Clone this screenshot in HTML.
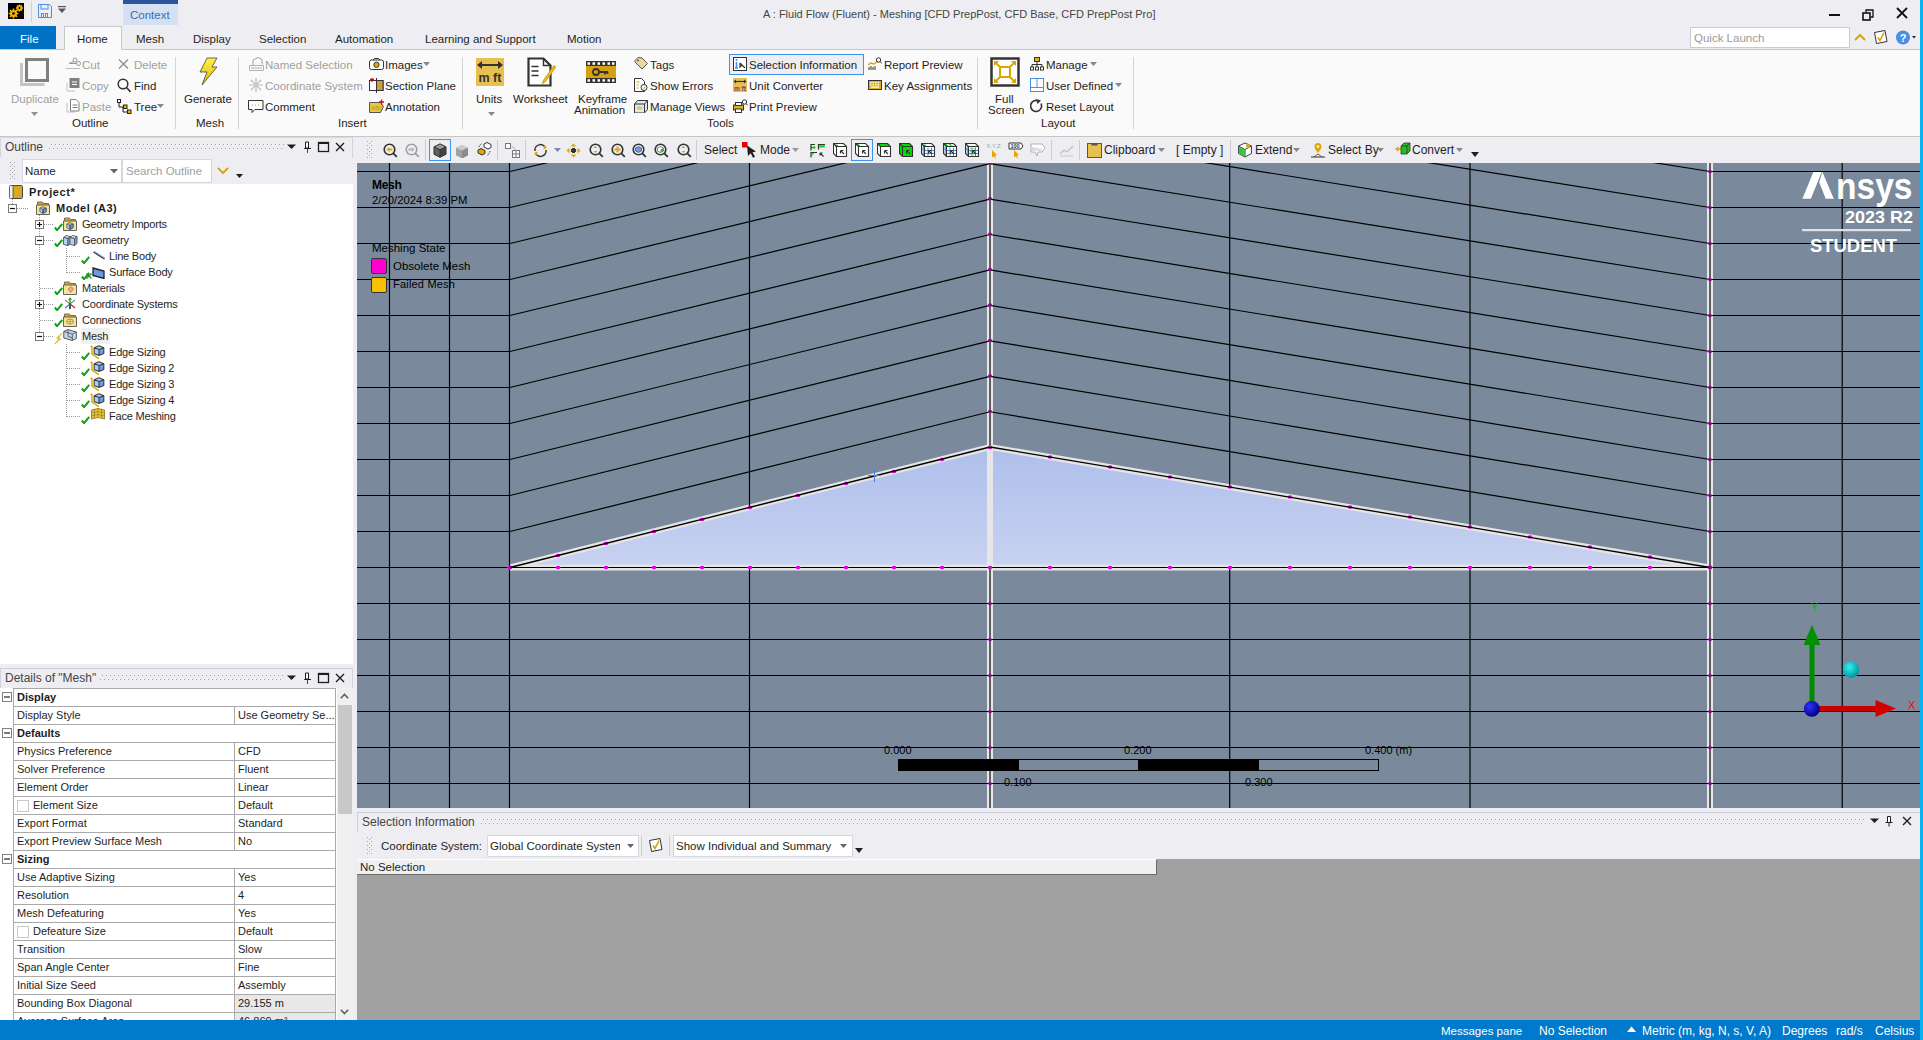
<!DOCTYPE html>
<html><head><meta charset="utf-8">
<style>
*{margin:0;padding:0;box-sizing:border-box}
html,body{width:1923px;height:1040px;overflow:hidden}
body{position:relative;background:#eeeef2;font-family:"Liberation Sans",sans-serif;font-size:11px;color:#1e1e1e}
.a{position:absolute}
.t{position:absolute;white-space:nowrap;line-height:14px}
.dis{color:#a0a0a0}
</style></head><body>
<!-- ===== TITLE BAR ===== -->
<div class="a" style="left:0;top:0;width:1920px;height:26px;background:#eeeef2"></div>
<!-- ===== TABS ===== -->
<div class="a" style="left:0;top:26px;width:56px;height:23px;background:#0072c6"></div>
<div class="t" style="left:20px;top:32px;color:#fff;font-size:11.5px">File</div>
<div class="a" style="left:64px;top:26px;width:58px;height:24px;background:#fafafa;border:1px solid #c8c8c8;border-bottom:none"></div>
<!-- ===== RIBBON ===== -->
<div class="a" style="left:0;top:49px;width:1920px;height:88px;background:#fafafa;border-top:1px solid #c8c8c8;border-bottom:1px solid #c6c6c6"></div>
<div class="a" style="left:65px;top:49px;width:56px;height:2px;background:#fafafa"></div>
<!-- title bar content -->
<svg class="a" style="left:8px;top:3px" width="16" height="16" viewBox="0 0 16 16"><rect width="16" height="16" fill="#000"/><g fill="#f0b000"><circle cx="5.5" cy="10.5" r="3.6"/><circle cx="11.5" cy="5" r="2.8"/></g><g fill="#000"><circle cx="5.5" cy="10.5" r="1.3"/><circle cx="11.5" cy="5" r="1"/></g><g stroke="#f0b000" stroke-width="1.6"><path d="M5.5 5.6v9.8M0.6 10.5h9.8M2 7l7 7M9 7l-7 7"/><path d="M11.5 1.4v7.2M7.9 5h7.2M9 2.5l5 5M14 2.5l-5 5"/></g><g fill="#000"><circle cx="5.5" cy="10.5" r="1.3"/><circle cx="11.5" cy="5" r="1"/></g></svg>
<div class="a" style="left:31px;top:1px;width:1px;height:21px;background:#d0d0d8"></div>
<svg class="a" style="left:38px;top:4px" width="14" height="14" viewBox="0 0 14 14"><path d="M0.5 0.5h11l2 2v11h-13z" fill="none" stroke="#4a90e2"/><rect x="3" y="0.5" width="7" height="4.5" fill="none" stroke="#4a90e2"/><rect x="3.5" y="9.5" width="2" height="4" fill="none" stroke="#4a90e2"/><rect x="7.5" y="9.5" width="2" height="4" fill="none" stroke="#4a90e2"/></svg>
<svg class="a" style="left:58px;top:6px" width="8" height="8" viewBox="0 0 8 8"><rect x="0" y="0" width="8" height="1.2" fill="#555"/><path d="M0 2.5h8L4 7z" fill="#555"/></svg>
<div class="a" style="left:123px;top:0;width:55px;height:4px;background:#2b579a"></div>
<div class="a" style="left:123px;top:4px;width:55px;height:21px;background:#d5e1f2"></div>
<div class="t" style="left:130px;top:8px;color:#3a6cb0;font-size:11.5px">Context</div>
<div class="t" style="left:763px;top:7px;color:#444;font-size:11px">A : Fluid Flow (Fluent) - Meshing [CFD PrepPost, CFD Base, CFD PrepPost Pro]</div>
<div class="a" style="left:1829px;top:14px;width:11px;height:2px;background:#111"></div>
<svg class="a" style="left:1862px;top:9px" width="12" height="12" viewBox="0 0 12 12"><rect x="1" y="4" width="7" height="7" fill="none" stroke="#111" stroke-width="1.6"/><path d="M4 3.5V1h7v7H8.5" fill="none" stroke="#111" stroke-width="1.3"/></svg>
<svg class="a" style="left:1896px;top:7px" width="12" height="12" viewBox="0 0 12 12"><path d="M1 1l10 10M11 1L1 11" stroke="#111" stroke-width="1.8"/></svg>
<!-- tabs -->
<div class="t" style="left:77px;top:32px;font-size:11.5px">Home</div>
<div class="t" style="left:136px;top:32px;font-size:11.5px">Mesh</div>
<div class="t" style="left:193px;top:32px;font-size:11.5px">Display</div>
<div class="t" style="left:259px;top:32px;font-size:11.5px">Selection</div>
<div class="t" style="left:335px;top:32px;font-size:11.5px">Automation</div>
<div class="t" style="left:425px;top:32px;font-size:11.5px">Learning and Support</div>
<div class="t" style="left:567px;top:32px;font-size:11.5px">Motion</div>
<div class="a" style="left:1690px;top:27px;width:160px;height:21px;background:#fff;border:1px solid #c6cbd6"></div>
<div class="t" style="left:1694px;top:31px;color:#9a9a9a;font-size:11.5px">Quick Launch</div>
<svg class="a" style="left:1854px;top:33px" width="12" height="8" viewBox="0 0 12 8"><path d="M1 7l5-5 5 5" fill="none" stroke="#d8a000" stroke-width="1.8"/></svg>
<svg class="a" style="left:1873px;top:29px" width="16" height="16" viewBox="0 0 16 16"><path d="M1.5 3.5l10.5-2 2 11-10.5 2z" fill="#fff" stroke="#333"/><path d="M5 8.5l2 3 4-8" fill="none" stroke="#d8a000" stroke-width="1.6"/></svg>
<svg class="a" style="left:1896px;top:30px" width="20" height="15" viewBox="0 0 20 15"><circle cx="7" cy="7.5" r="7" fill="#4a90e2"/><text x="7" y="11.5" font-size="11" font-weight="bold" fill="#fff" text-anchor="middle" font-family="Liberation Sans">?</text><path d="M16 6h4l-2 2.5z" fill="#222"/></svg>

<!-- ===== RIBBON GROUP: Outline ===== -->
<svg class="a" style="left:20px;top:58px" width="29" height="28" viewBox="0 0 29 28"><path d="M1.5 5v21.5h23" fill="none" stroke="#c4c4c4" stroke-width="3"/><rect x="6.5" y="1.5" width="21" height="21" fill="none" stroke="#808080" stroke-width="3"/></svg>
<div class="t dis" style="left:11px;top:92px;font-size:11.5px">Duplicate</div>
<svg class="a" style="left:31px;top:112px" width="7" height="4" viewBox="0 0 7 4"><path d="M0 0h7L3.5 4z" fill="#909090"/></svg>
<svg class="a" style="left:66px;top:57px" width="15" height="13" viewBox="0 0 15 13"><circle cx="9" cy="3" r="2" fill="none" stroke="#999"/><circle cx="12.5" cy="6.5" r="2" fill="none" stroke="#999"/><path d="M3 6.5h8M8 4.5l-5 2" stroke="#999"/><path d="M0 11.5h14" stroke="#bbb"/></svg>
<div class="t dis" style="left:82px;top:58px;font-size:11.5px">Cut</div>
<svg class="a" style="left:66px;top:78px" width="14" height="14" viewBox="0 0 14 14"><path d="M1 5v8h8" fill="none" stroke="#c0c0c0"/><rect x="3.5" y="0" width="10" height="10" fill="#808080"/><path d="M6 4h5M6 6.5h5" stroke="#fff" stroke-width="1"/></svg>
<div class="t dis" style="left:82px;top:79px;font-size:11.5px">Copy</div>
<svg class="a" style="left:66px;top:99px" width="14" height="14" viewBox="0 0 14 14"><path d="M1 4v9h8" fill="none" stroke="#c0c0c0"/><path d="M4.5 0.5h5.5l3 3v8.5h-8.5z" fill="#fff" stroke="#808080"/><path d="M6.5 6h5M6.5 8.5h5" stroke="#808080"/></svg>
<div class="t dis" style="left:82px;top:100px;font-size:11.5px">Paste</div>
<svg class="a" style="left:118px;top:59px" width="11" height="10" viewBox="0 0 11 10"><path d="M1 0.5l9 9M10 0.5l-9 9" stroke="#8a8a8a" stroke-width="1.2"/></svg>
<div class="t dis" style="left:134px;top:58px;font-size:11.5px">Delete</div>
<svg class="a" style="left:117px;top:78px" width="14" height="15" viewBox="0 0 14 15"><circle cx="6" cy="6" r="4.8" fill="none" stroke="#333" stroke-width="1.5"/><path d="M9.5 9.5l4 4.5" stroke="#333" stroke-width="1.6"/></svg>
<div class="t" style="left:134px;top:79px;font-size:11.5px">Find</div>
<svg class="a" style="left:117px;top:99px" width="15" height="15" viewBox="0 0 15 15"><rect x="0.5" y="0.5" width="3" height="3" fill="#fff" stroke="#222"/><path d="M2 3.5v4.5h4M6 8v5h4" fill="none" stroke="#222"/><rect x="6.5" y="6" width="3.5" height="3.5" fill="#e8b800" stroke="#222"/><rect x="10.5" y="11" width="3.5" height="3.5" fill="#e8b800" stroke="#222"/></svg>
<div class="t" style="left:134px;top:100px;font-size:11.5px">Tree</div>
<svg class="a" style="left:157px;top:104px" width="7" height="4" viewBox="0 0 7 4"><path d="M0 0h7L3.5 4z" fill="#888"/></svg>
<div class="t" style="left:72px;top:116px;font-size:11.5px">Outline</div>
<div class="a" style="left:175px;top:57px;width:1px;height:72px;background:#d4d4d4"></div>
<!-- Mesh group -->
<svg class="a" style="left:199px;top:57px" width="20" height="29" viewBox="0 0 20 29"><defs><linearGradient id="lg1" x1="0" y1="0" x2="0" y2="1"><stop offset="0" stop-color="#fff14a"/><stop offset="1" stop-color="#e0b800"/></linearGradient></defs><path d="M8 1h10l-5 9h5L3 28l5-13H1z" fill="url(#lg1)" stroke="#444" stroke-width="0.8"/></svg>
<div class="t" style="left:184px;top:92px;font-size:11.5px">Generate</div>
<div class="t" style="left:196px;top:116px;font-size:11.5px">Mesh</div>
<div class="a" style="left:238px;top:57px;width:1px;height:72px;background:#d4d4d4"></div>
<!-- Insert group -->
<svg class="a" style="left:249px;top:57px" width="15" height="14" viewBox="0 0 15 14"><path d="M0.5 8.5h14v5H0.5z" fill="none" stroke="#b0b0b0"/><path d="M4 8V3l5-2.5 4 2v5" fill="none" stroke="#a0a0a0"/><path d="M2 11h11" stroke="#b0b0b0"/></svg>
<div class="t dis" style="left:265px;top:58px;font-size:11.5px">Named Selection</div>
<svg class="a" style="left:249px;top:78px" width="14" height="14" viewBox="0 0 14 14"><path d="M7 0v14M0 7h14M2 2l10 10M12 2L2 12" stroke="#b8b8b8" stroke-width="1.2"/><circle cx="7" cy="7" r="2" fill="#c8c8c8"/></svg>
<div class="t dis" style="left:265px;top:79px;font-size:11.5px">Coordinate System</div>
<svg class="a" style="left:248px;top:100px" width="16" height="13" viewBox="0 0 16 13"><path d="M0.5 0.5h14.5v9H7l-3 3v-3H0.5z" fill="#fff" stroke="#333"/><path d="M4 5h1M7 5h1M10 5h1" stroke="#d8a000"/></svg>
<div class="t" style="left:265px;top:100px;font-size:11.5px">Comment</div>
<svg class="a" style="left:369px;top:58px" width="15" height="12" viewBox="0 0 15 12"><rect x="0.5" y="2" width="14" height="9.5" rx="2" fill="#fff" stroke="#333"/><path d="M4 2l1.5-1.5h4L11 2" fill="none" stroke="#333"/><circle cx="7.5" cy="6.8" r="2.6" fill="#e0b000" stroke="#333"/></svg>
<div class="t" style="left:385px;top:58px;font-size:11.5px">Images</div>
<svg class="a" style="left:423px;top:62px" width="7" height="4" viewBox="0 0 7 4"><path d="M0 0h7L3.5 4z" fill="#888"/></svg>
<svg class="a" style="left:369px;top:78px" width="15" height="15" viewBox="0 0 15 15"><rect x="0.5" y="2.5" width="13.5" height="10" fill="#fff" stroke="#333"/><rect x="7.5" y="2.5" width="6.5" height="10" fill="#c8a040" stroke="#333"/><path d="M7.5 0v15" stroke="#333"/><path d="M1 1.5h4M3 0v4" stroke="#e00" stroke-width="1.3"/></svg>
<div class="t" style="left:385px;top:79px;font-size:11.5px">Section Plane</div>
<svg class="a" style="left:369px;top:99px" width="15" height="14" viewBox="0 0 15 14"><path d="M0.5 3.5h11l3 4-3 6h-11z" fill="#e8c840" stroke="#555"/><text x="2" y="10.5" font-size="6" fill="#b09030" font-family="Liberation Sans">ABC</text><path d="M10 3h5M12.5 0.5v5" stroke="#e00" stroke-width="1.3"/></svg>
<div class="t" style="left:385px;top:100px;font-size:11.5px">Annotation</div>
<div class="t" style="left:338px;top:116px;font-size:11.5px">Insert</div>
<div class="a" style="left:462px;top:57px;width:1px;height:72px;background:#d4d4d4"></div>
<!-- Tools group -->
<svg class="a" style="left:476px;top:58px" width="28" height="28" viewBox="0 0 28 28"><rect width="28" height="28" fill="#e8c050"/><path d="M3 7h22" stroke="#333" stroke-width="2"/><path d="M1 7l5-4v8zM27 7l-5-4v8z" fill="#333"/><text x="14" y="24" font-size="12.5" font-weight="bold" fill="#333" text-anchor="middle" font-family="Liberation Sans">m ft</text></svg>
<div class="t" style="left:476px;top:92px;font-size:11.5px">Units</div>
<svg class="a" style="left:488px;top:112px" width="7" height="4" viewBox="0 0 7 4"><path d="M0 0h7L3.5 4z" fill="#888"/></svg>
<svg class="a" style="left:527px;top:57px" width="29" height="30" viewBox="0 0 29 30"><path d="M1.5 1.5h15l7 7v20H1.5z" fill="#fff" stroke="#333" stroke-width="2.2"/><path d="M16.5 1.5v7h7" fill="none" stroke="#333" stroke-width="1.5"/><path d="M4.5 9.5h7M4.5 14h7M4.5 18.5h7" stroke="#333" stroke-width="1.6"/><path d="M27 9l-10 14-1.5 3.5 3-2.5 10-14z" fill="#fff" stroke="#d8a800" stroke-width="1.4"/></svg>
<div class="t" style="left:513px;top:92px;font-size:11.5px">Worksheet</div>
<svg class="a" style="left:586px;top:61px" width="30" height="22" viewBox="0 0 30 22"><rect width="30" height="22" fill="#333"/><rect x="0" y="5" width="30" height="12" fill="#d8a010"/><g fill="#fff"><rect x="1.5" y="1.3" width="2.5" height="2.5"/><rect x="6.5" y="1.3" width="2.5" height="2.5"/><rect x="11.5" y="1.3" width="2.5" height="2.5"/><rect x="16.5" y="1.3" width="2.5" height="2.5"/><rect x="21.5" y="1.3" width="2.5" height="2.5"/><rect x="26" y="1.3" width="2.5" height="2.5"/><rect x="1.5" y="18.2" width="2.5" height="2.5"/><rect x="6.5" y="18.2" width="2.5" height="2.5"/><rect x="11.5" y="18.2" width="2.5" height="2.5"/><rect x="16.5" y="18.2" width="2.5" height="2.5"/><rect x="21.5" y="18.2" width="2.5" height="2.5"/><rect x="26" y="18.2" width="2.5" height="2.5"/></g><circle cx="10" cy="11" r="3" fill="none" stroke="#333" stroke-width="1.8"/><path d="M13 11h9M19 11v2.5M21.5 11v2" stroke="#333" stroke-width="1.8"/></svg>
<div class="t" style="left:578px;top:92px;font-size:11.5px">Keyframe</div>
<div class="t" style="left:574px;top:103px;font-size:11.5px">Animation</div>
<svg class="a" style="left:634px;top:57px" width="14" height="14" viewBox="0 0 14 14"><path d="M1 3.5l3-3 4 0.5 5.5 5.5-5.5 5.5-7-7z" fill="#e8d8a0" stroke="#555"/><circle cx="4" cy="3.5" r="1" fill="#555"/></svg>
<div class="t" style="left:650px;top:58px;font-size:11.5px">Tags</div>
<svg class="a" style="left:634px;top:78px" width="14" height="14" viewBox="0 0 14 14"><path d="M0.5 0.5h7l3 3v3M10.5 12v1.5H0.5v-13" fill="#fff" stroke="#333"/><path d="M2.5 4h3M2.5 7h2M2.5 10h2" stroke="#d8a000"/><circle cx="10" cy="9.5" r="3" fill="#fff" stroke="#333"/><path d="M8.8 9.5l1 1 1.5-2" stroke="#d8a000" fill="none"/></svg>
<div class="t" style="left:650px;top:79px;font-size:11.5px">Show Errors</div>
<svg class="a" style="left:634px;top:100px" width="14" height="13" viewBox="0 0 14 13"><path d="M0.5 4l3-3.5h10v9l-3 3.5h-10z" fill="#dce8f4" stroke="#333"/><path d="M0.5 4h10v8.5M10.5 4l3-3.5" fill="none" stroke="#333"/><ellipse cx="5.5" cy="8" rx="3" ry="1.8" fill="#e8c850"/></svg>
<div class="t" style="left:650px;top:100px;font-size:11.5px">Manage Views</div>
<div class="a" style="left:729px;top:54px;width:135px;height:21px;background:#eeeef2;border:1px solid #3c94ee"></div>
<svg class="a" style="left:733px;top:57px" width="14" height="14" viewBox="0 0 14 14"><rect x="0.5" y="0.5" width="13" height="13" fill="#fff" stroke="#333"/><circle cx="3.5" cy="3" r="1.1" fill="#4a90e2"/><path d="M3.5 5v6M2 11h3" stroke="#4a90e2" stroke-width="1.6"/><path d="M7 6l5 5M7 6v4l1.5-1.5" stroke="#333" stroke-width="1.2" fill="none"/></svg>
<div class="t" style="left:749px;top:58px;font-size:11.5px">Selection Information</div>
<svg class="a" style="left:733px;top:78px" width="14" height="14" viewBox="0 0 14 14"><rect width="14" height="14" fill="#e8c050"/><path d="M2 3.5h10" stroke="#333" stroke-width="1.2"/><path d="M0.5 3.5l2.5-2v4zM13.5 3.5l-2.5-2v4z" fill="#333"/><text x="7" y="12.5" font-size="6.5" font-weight="bold" fill="#555" text-anchor="middle" font-family="Liberation Sans">m ft</text></svg>
<div class="t" style="left:749px;top:79px;font-size:11.5px">Unit Converter</div>
<svg class="a" style="left:733px;top:99px" width="15" height="14" viewBox="0 0 15 14"><rect x="0.5" y="6" width="10" height="5" fill="#e0b020" stroke="#333"/><rect x="2.5" y="3.5" width="6" height="3" fill="#fff" stroke="#333"/><rect x="2.5" y="10" width="6" height="3.5" fill="#fff" stroke="#333"/><circle cx="11.5" cy="3" r="2.2" fill="none" stroke="#333"/><path d="M13 4.5l1.8 2" stroke="#333"/></svg>
<div class="t" style="left:749px;top:100px;font-size:11.5px">Print Preview</div>
<svg class="a" style="left:868px;top:57px" width="14" height="14" viewBox="0 0 14 14"><path d="M1 13v-3M3 13v-4M5 13v-3M7 13v-4" stroke="#333"/><path d="M0 8l3-2 3 1 4-3" fill="none" stroke="#e0a800" stroke-width="1.5"/><circle cx="10.5" cy="3" r="2.2" fill="none" stroke="#333"/><path d="M12 4.5l1.8 2" stroke="#333"/></svg>
<div class="t" style="left:884px;top:58px;font-size:11.5px">Report Preview</div>
<svg class="a" style="left:868px;top:80px" width="14" height="10" viewBox="0 0 14 10"><rect x="0.5" y="0.5" width="13" height="9" fill="#e0b020" stroke="#333"/><g fill="#fff"><rect x="2" y="2" width="1.5" height="1.2"/><rect x="4.5" y="2" width="1.5" height="1.2"/><rect x="7" y="2" width="1.5" height="1.2"/><rect x="9.5" y="2" width="1.5" height="1.2"/><rect x="2" y="4.2" width="1.5" height="1.2"/><rect x="4.5" y="4.2" width="1.5" height="1.2"/><rect x="7" y="4.2" width="1.5" height="1.2"/><rect x="9.5" y="4.2" width="1.5" height="1.2"/><rect x="3" y="6.5" width="8" height="1.2"/></g></svg>
<div class="t" style="left:884px;top:79px;font-size:11.5px">Key Assignments</div>
<div class="t" style="left:707px;top:116px;font-size:11.5px">Tools</div>
<div class="a" style="left:977px;top:57px;width:1px;height:72px;background:#d4d4d4"></div>
<!-- Layout group -->
<svg class="a" style="left:990px;top:57px" width="30" height="30" viewBox="0 0 30 30"><rect x="1.5" y="1.5" width="27" height="27" fill="#fff" stroke="#333" stroke-width="2.5"/><rect x="10" y="10" width="10" height="10" fill="none" stroke="#d8a800" stroke-width="2"/><path d="M5 5l5 5M25 5l-5 5M5 25l5-5M25 25l-5-5" stroke="#d8a800" stroke-width="2"/><path d="M4 4h5L4 9zM26 4h-5l5 5zM4 26h5l-5-5zM26 26h-5l5-5z" fill="#d8a800"/></svg>
<div class="t" style="left:995px;top:92px;font-size:11.5px">Full</div>
<div class="t" style="left:988px;top:103px;font-size:11.5px">Screen</div>
<svg class="a" style="left:1030px;top:57px" width="14" height="14" viewBox="0 0 14 14"><rect x="4.5" y="0.5" width="5" height="4" fill="#e0b020" stroke="#333"/><path d="M7 4.5v3M2 7.5h10M2 7.5v2.5M7 7.5v2.5M12 7.5v2.5" stroke="#333"/><rect x="0.5" y="10" width="3" height="3" fill="#fff" stroke="#333"/><rect x="5.5" y="10" width="3" height="3" fill="#fff" stroke="#333"/><rect x="10.5" y="10" width="3" height="3" fill="#fff" stroke="#333"/></svg>
<div class="t" style="left:1046px;top:58px;font-size:11.5px">Manage</div>
<svg class="a" style="left:1090px;top:62px" width="7" height="4" viewBox="0 0 7 4"><path d="M0 0h7L3.5 4z" fill="#888"/></svg>
<svg class="a" style="left:1030px;top:78px" width="14" height="14" viewBox="0 0 14 14"><rect x="0.5" y="0.5" width="13" height="13" fill="#fff" stroke="#4a90e2"/><path d="M7 0.5v9M0.5 9.5h13" stroke="#4a90e2"/></svg>
<div class="t" style="left:1046px;top:79px;font-size:11.5px">User Defined</div>
<svg class="a" style="left:1115px;top:83px" width="7" height="4" viewBox="0 0 7 4"><path d="M0 0h7L3.5 4z" fill="#888"/></svg>
<svg class="a" style="left:1030px;top:99px" width="14" height="14" viewBox="0 0 14 14"><path d="M11 4.5A5.5 5.5 0 1 1 7 1.5" fill="none" stroke="#333" stroke-width="1.6"/><path d="M6 0l5 1.5-3.5 3.5z" fill="#333"/></svg>
<div class="t" style="left:1046px;top:100px;font-size:11.5px">Reset Layout</div>
<div class="t" style="left:1041px;top:116px;font-size:11.5px">Layout</div>
<div class="a" style="left:1133px;top:57px;width:1px;height:72px;background:#d4d4d4"></div>

<!-- ===== LEFT PANEL ===== -->
<div class="a" style="left:0;top:184px;width:353px;height:480px;background:#fff"></div>
<div class="a" style="left:0;top:688px;width:337px;height:332px;background:#fff"></div>
<svg width="0" height="0" style="position:absolute"><defs>
<symbol id="chk" viewBox="0 0 9 8"><path d="M0.8 4.5l2.3 2.6L8.2 0.8" fill="none" stroke="#179a17" stroke-width="2"/></symbol>
<symbol id="fold" viewBox="0 0 14 14"><path d="M1.5 1h5l1 1.5h5v3H1.5z" fill="#d8a820" stroke="#555" stroke-width="0.8"/><path d="M0.5 4h13v9.5H0.5z" fill="#f4e49a" stroke="#555" stroke-width="0.9"/></symbol>
<symbol id="cube" viewBox="0 0 14 14"><path d="M7 1l5.5 2.5v6.5L7 13 1.5 10V3.5z" fill="#a8c8f0" stroke="#444" stroke-width="1.1"/><path d="M1.5 3.5L7 6l5.5-2.5M7 6v7" fill="none" stroke="#444" stroke-width="1.1"/><path d="M7 6l5.5-2.5v6.5L7 13z" fill="#5a9ae8"/><path d="M7 6l5.5-2.5v6.5L7 13zM7 6v7" fill="none" stroke="#444" stroke-width="1.1"/></symbol>
<symbol id="cubes2" viewBox="0 0 15 11"><path d="M0.5 2.5L3 0.5L7.5 1.5L5 3.5z" fill="#dce9f8" stroke="#555" stroke-width="0.9"/><path d="M0.5 2.5L5 3.5V10.5L0.5 9.5z" fill="#b4d0f2" stroke="#555" stroke-width="0.9"/><path d="M5 3.5L7.5 1.5V8.5L5 10.5z" fill="#6aa4e8" stroke="#555" stroke-width="0.9"/><path d="M7.0 2.5L9.5 0.5L14.0 1.5L11.5 3.5z" fill="#dce9f8" stroke="#555" stroke-width="0.9"/><path d="M7.0 2.5L11.5 3.5V10.5L7.0 9.5z" fill="#b4d0f2" stroke="#555" stroke-width="0.9"/><path d="M11.5 3.5L14.0 1.5V8.5L11.5 10.5z" fill="#6aa4e8" stroke="#555" stroke-width="0.9"/></symbol>
<symbol id="mbox" viewBox="0 0 9 9"><rect x="0.5" y="0.5" width="8" height="8" fill="#fff" stroke="#7a7a7a"/><path d="M2 4.5h5" stroke="#111" stroke-width="1.2"/></symbol>
<symbol id="pbox" viewBox="0 0 9 9"><rect x="0.5" y="0.5" width="8" height="8" fill="#fff" stroke="#7a7a7a"/><path d="M2 4.5h5M4.5 2v5" stroke="#111" stroke-width="1.2"/></symbol>
<symbol id="esz" viewBox="0 0 15 15"><path d="M0.5 1.8l1.5 0.8v7.2l7 5" fill="none" stroke="#d8a000" stroke-width="1.4"/><path d="M9 1.8L13.8 3.7V9.5L9 11.5 4.2 9.5V3.7z" fill="#a8ccf6"/><path d="M9 5.6L13.8 3.7V9.5L9 11.5z" fill="#5aa0f0"/><path d="M9 1.8L13.8 3.7V9.5L9 11.5 4.2 9.5V3.7zM4.2 3.7L9 5.6 13.8 3.7M9 5.6v5.9" fill="none" stroke="#404040" stroke-width="1.1" stroke-linejoin="round"/></symbol>
</defs></svg>
<div class="a" style="left:0;top:137px;width:353px;height:1px;background:#d6d9e3"></div>
<div class="a" style="left:352px;top:137px;width:1px;height:21px;background:#d0d4de"></div><div class="a" style="left:0;top:138px;width:1px;height:19px;background:#d0d4de"></div>
<div class="t" style="left:5px;top:140px;font-size:12px;color:#444">Outline</div>
<svg class="a" style="left:49px;top:143px" width="235" height="7"><defs><pattern id="gp1" width="4" height="8" patternUnits="userSpaceOnUse"><rect x="2" y="1" width="1" height="1" fill="#a4a4ac"/><rect x="0" y="5" width="1" height="1" fill="#a4a4ac"/></pattern></defs><rect width="235" height="7" fill="url(#gp1)"/></svg>
<svg class="a" style="left:287px;top:141px" width="58" height="12" viewBox="0 0 58 12"><path d="M0 3.5h9L4.5 8z" fill="#1e1e1e"/><path d="M18 1h4v6h2v1h-3v4h-0.8v-4h-3V7h2z" fill="#1e1e1e"/><path d="M18.5 1h3v6h-3z" fill="#fff" stroke="#1e1e1e"/><rect x="31.5" y="1.5" width="10" height="9" fill="none" stroke="#1e1e1e" stroke-width="1.3"/><path d="M31.5 2h10" stroke="#1e1e1e" stroke-width="2"/><path d="M49 2l8 8M57 2l-8 8" stroke="#1e1e1e" stroke-width="1.4"/></svg>
<svg class="a" style="left:10px;top:162px" width="5" height="17"><defs><pattern id="gp3" width="4" height="4" patternUnits="userSpaceOnUse"><rect x="0" y="0" width="1" height="1" fill="#a4a4ac"/><rect x="2" y="2" width="1" height="1" fill="#a4a4ac"/></pattern></defs><rect width="5" height="17" fill="url(#gp3)"/></svg>
<div class="a" style="left:22px;top:159px;width:100px;height:24px;background:#fff;border:1px solid #d4d7e0"></div>
<div class="t" style="left:25px;top:164px;font-size:11.5px">Name</div>
<svg class="a" style="left:110px;top:169px" width="8" height="5" viewBox="0 0 8 5"><path d="M0 0h8L4 4.5z" fill="#666"/></svg>
<div class="a" style="left:122px;top:159px;width:90px;height:24px;background:#fff;border:1px solid #d4d7e0"></div>
<div class="t" style="left:126px;top:164px;font-size:11.5px;color:#a0a0a0">Search Outline</div>
<svg class="a" style="left:217px;top:167px" width="12" height="8" viewBox="0 0 12 8"><path d="M1 1l5 5 5-5" fill="none" stroke="#d8a000" stroke-width="1.8"/></svg>
<svg class="a" style="left:236px;top:174px" width="7" height="4" viewBox="0 0 7 4"><path d="M0 0h7L3.5 4z" fill="#1e1e1e"/></svg>
<div class="a" style="left:12px;top:199px;width:1px;height:5px;background-image:linear-gradient(#9a9a9a 50%,transparent 50%);background-size:1px 2px"></div>
<div class="a" style="left:17px;top:208px;width:11px;height:1px;background-image:linear-gradient(90deg,#9a9a9a 50%,transparent 50%);background-size:2px 1px"></div>
<div class="a" style="left:39px;top:215px;width:1px;height:121px;background-image:linear-gradient(#9a9a9a 50%,transparent 50%);background-size:1px 2px"></div>
<div class="a" style="left:66px;top:248px;width:1px;height:25px;background-image:linear-gradient(#9a9a9a 50%,transparent 50%);background-size:1px 2px"></div>
<div class="a" style="left:66px;top:344px;width:1px;height:73px;background-image:linear-gradient(#9a9a9a 50%,transparent 50%);background-size:1px 2px"></div>
<div class="a" style="left:44px;top:224px;width:10px;height:1px;background-image:linear-gradient(90deg,#9a9a9a 50%,transparent 50%);background-size:2px 1px"></div>
<div class="a" style="left:44px;top:240px;width:10px;height:1px;background-image:linear-gradient(90deg,#9a9a9a 50%,transparent 50%);background-size:2px 1px"></div>
<div class="a" style="left:40px;top:288px;width:14px;height:1px;background-image:linear-gradient(90deg,#9a9a9a 50%,transparent 50%);background-size:2px 1px"></div>
<div class="a" style="left:44px;top:304px;width:10px;height:1px;background-image:linear-gradient(90deg,#9a9a9a 50%,transparent 50%);background-size:2px 1px"></div>
<div class="a" style="left:40px;top:320px;width:14px;height:1px;background-image:linear-gradient(90deg,#9a9a9a 50%,transparent 50%);background-size:2px 1px"></div>
<div class="a" style="left:44px;top:336px;width:10px;height:1px;background-image:linear-gradient(90deg,#9a9a9a 50%,transparent 50%);background-size:2px 1px"></div>
<div class="a" style="left:67px;top:256px;width:14px;height:1px;background-image:linear-gradient(90deg,#9a9a9a 50%,transparent 50%);background-size:2px 1px"></div>
<div class="a" style="left:67px;top:272px;width:14px;height:1px;background-image:linear-gradient(90deg,#9a9a9a 50%,transparent 50%);background-size:2px 1px"></div>
<div class="a" style="left:67px;top:352px;width:14px;height:1px;background-image:linear-gradient(90deg,#9a9a9a 50%,transparent 50%);background-size:2px 1px"></div>
<div class="a" style="left:67px;top:368px;width:14px;height:1px;background-image:linear-gradient(90deg,#9a9a9a 50%,transparent 50%);background-size:2px 1px"></div>
<div class="a" style="left:67px;top:384px;width:14px;height:1px;background-image:linear-gradient(90deg,#9a9a9a 50%,transparent 50%);background-size:2px 1px"></div>
<div class="a" style="left:67px;top:400px;width:14px;height:1px;background-image:linear-gradient(90deg,#9a9a9a 50%,transparent 50%);background-size:2px 1px"></div>
<div class="a" style="left:67px;top:416px;width:14px;height:1px;background-image:linear-gradient(90deg,#9a9a9a 50%,transparent 50%);background-size:2px 1px"></div>
<svg class="a" style="left:9px;top:185px" width="14" height="14" viewBox="0 0 14 14"><rect x="0.5" y="0.5" width="13" height="13" rx="1" fill="#d8a820" stroke="#444"/><rect x="0.8" y="0.8" width="3.2" height="12.4" fill="#eee"/><path d="M4 0.5v13" stroke="#444" stroke-width="0.8"/></svg>
<div class="t" style="left:29px;top:185px;font-size:11px;font-weight:bold;letter-spacing:0.6px;">Project*</div>
<svg class="a" style="left:8px;top:204px" width="9" height="9"><use href="#mbox" width="9" height="9"/></svg>
<svg class="a" style="left:36px;top:201px" width="14" height="14"><use href="#fold" width="14" height="14"/></svg>
<svg class="a" style="left:39px;top:206px" width="8" height="8"><use href="#cube" width="8" height="8"/></svg>
<div class="t" style="left:56px;top:201px;font-size:11px;font-weight:bold;letter-spacing:0.5px;">Model (A3)</div>
<svg class="a" style="left:35px;top:220px" width="9" height="9"><use href="#pbox" width="9" height="9"/></svg><svg class="a" style="left:54px;top:223px" width="9" height="8"><use href="#chk" width="9" height="8"/></svg><svg class="a" style="left:63px;top:217px" width="14" height="14"><use href="#fold" width="14" height="14"/></svg><svg class="a" style="left:66px;top:222px" width="8" height="8"><use href="#cube" width="8" height="8"/></svg><div class="t" style="left:82px;top:217px;font-size:11px;letter-spacing:-0.2px;">Geometry Imports</div>
<svg class="a" style="left:35px;top:236px" width="9" height="9"><use href="#mbox" width="9" height="9"/></svg><svg class="a" style="left:54px;top:239px" width="9" height="8"><use href="#chk" width="9" height="8"/></svg><svg class="a" style="left:63px;top:235px" width="15" height="11"><use href="#cubes2" width="15" height="11"/></svg><div class="t" style="left:82px;top:233px;font-size:11px;letter-spacing:-0.2px;">Geometry</div>
<svg class="a" style="left:81px;top:256px" width="9" height="8"><use href="#chk" width="9" height="8"/></svg>
<svg class="a" style="left:93px;top:251px" width="12" height="9" viewBox="0 0 12 9"><path d="M0.5 1l11 7" stroke="#333" stroke-width="1.3"/><path d="M1 0l11 7" stroke="#8ab0e0" stroke-width="1"/></svg>
<div class="t" style="left:109px;top:249px;font-size:11px;letter-spacing:-0.2px;">Line Body</div>
<svg class="a" style="left:81px;top:272px" width="9" height="8"><use href="#chk" width="9" height="8"/></svg>
<svg class="a" style="left:86px;top:273px" width="6" height="6" viewBox="0 0 6 6"><path d="M0.5 0.5l5 5M5.5 0.5l-5 5" stroke="#179a17" stroke-width="1.3"/></svg>
<svg class="a" style="left:92px;top:267px" width="13" height="12" viewBox="0 0 13 12"><path d="M1 1l11 3v7.5L1 8.5z" fill="#6a98e8" stroke="#222" stroke-width="1.3"/></svg>
<div class="t" style="left:109px;top:265px;font-size:11px;letter-spacing:-0.2px;">Surface Body</div>
<svg class="a" style="left:54px;top:287px" width="9" height="8"><use href="#chk" width="9" height="8"/></svg><svg class="a" style="left:63px;top:281px" width="14" height="14"><use href="#fold" width="14" height="14"/></svg><svg class="a" style="left:67px;top:286px" width="7" height="7" viewBox="0 0 7 7"><path d="M1 3l3-2.5 2.5 2.5-3 3.5z" fill="#e8b090" stroke="#a06040" stroke-width="0.6"/></svg><div class="t" style="left:82px;top:281px;font-size:11px;letter-spacing:-0.2px;">Materials</div>
<svg class="a" style="left:35px;top:300px" width="9" height="9"><use href="#pbox" width="9" height="9"/></svg><svg class="a" style="left:54px;top:303px" width="9" height="8"><use href="#chk" width="9" height="8"/></svg><svg class="a" style="left:63px;top:297px" width="14" height="14" viewBox="0 0 14 14"><path d="M7 7V1" stroke="#20b020" stroke-width="1.5"/><path d="M5 3l2-3 2 3z" fill="#20c020"/><path d="M7 7l5 4" stroke="#e02020" stroke-width="1.5"/><path d="M7 7L2 11" stroke="#4080e0" stroke-width="1.5"/><path d="M7 7L2 3M7 7l5-4" stroke="#555" stroke-width="1"/><rect x="6" y="6" width="2" height="6" fill="#555"/></svg><div class="t" style="left:82px;top:297px;font-size:11px;letter-spacing:-0.2px;">Coordinate Systems</div>
<svg class="a" style="left:54px;top:319px" width="9" height="8"><use href="#chk" width="9" height="8"/></svg><svg class="a" style="left:63px;top:313px" width="14" height="14"><use href="#fold" width="14" height="14"/></svg><svg class="a" style="left:66px;top:318px" width="8" height="7" viewBox="0 0 8 7"><ellipse cx="4" cy="3.5" rx="3.5" ry="2.5" fill="none" stroke="#b08020" stroke-width="0.8"/><path d="M1 3.5h6M4 1v5" stroke="#b08020" stroke-width="0.6"/></svg><div class="t" style="left:82px;top:313px;font-size:11px;letter-spacing:-0.2px;">Connections</div>
<svg class="a" style="left:35px;top:332px" width="9" height="9"><use href="#mbox" width="9" height="9"/></svg>
<div class="a" style="left:81px;top:328px;width:29px;height:16px;background:#f0f0f0"></div>
<svg class="a" style="left:54px;top:333px" width="9" height="11" viewBox="0 0 9 11"><path d="M8 0L2.5 5h3L0.5 11 7 6H4z" fill="#f4dc10" stroke="#c8a000" stroke-width="0.5"/></svg>
<svg class="a" style="left:63px;top:329px" width="14" height="12" viewBox="0 0 14 12"><path d="M0.8 2.5l4-2 8.5 2.5v6.5l-4 2L0.8 9z" fill="#c4daf4" stroke="#555" stroke-width="1"/><path d="M0.8 2.5L9.3 5l4-2M9.3 5v6.5M5 1.2v6.3l4.3 1.3" fill="none" stroke="#555" stroke-width="0.9"/></svg>
<div class="t" style="left:82px;top:329px;font-size:11px;letter-spacing:-0.2px;">Mesh</div>
<svg class="a" style="left:81px;top:352px" width="9" height="8"><use href="#chk" width="9" height="8"/></svg>
<svg class="a" style="left:90px;top:344px" width="15" height="15"><use href="#esz" width="15" height="15"/></svg>
<div class="t" style="left:109px;top:345px;font-size:11px;letter-spacing:-0.2px;">Edge Sizing</div>
<svg class="a" style="left:81px;top:368px" width="9" height="8"><use href="#chk" width="9" height="8"/></svg>
<svg class="a" style="left:90px;top:360px" width="15" height="15"><use href="#esz" width="15" height="15"/></svg>
<div class="t" style="left:109px;top:361px;font-size:11px;letter-spacing:-0.2px;">Edge Sizing 2</div>
<svg class="a" style="left:81px;top:384px" width="9" height="8"><use href="#chk" width="9" height="8"/></svg>
<svg class="a" style="left:90px;top:376px" width="15" height="15"><use href="#esz" width="15" height="15"/></svg>
<div class="t" style="left:109px;top:377px;font-size:11px;letter-spacing:-0.2px;">Edge Sizing 3</div>
<svg class="a" style="left:81px;top:400px" width="9" height="8"><use href="#chk" width="9" height="8"/></svg>
<svg class="a" style="left:90px;top:392px" width="15" height="15"><use href="#esz" width="15" height="15"/></svg>
<div class="t" style="left:109px;top:393px;font-size:11px;letter-spacing:-0.2px;">Edge Sizing 4</div>
<svg class="a" style="left:81px;top:416px" width="9" height="8"><use href="#chk" width="9" height="8"/></svg>
<svg class="a" style="left:91px;top:408px" width="14" height="13" viewBox="0 0 14 13"><path d="M0.5 2Q7 -1 13.5 2v9Q7 8 0.5 11z" fill="#e8c830" stroke="#8a7020" stroke-width="0.8"/><path d="M3.5 1v9M7 0.5v8.5M10.5 1v9M0.5 5Q7 2 13.5 5M0.5 8Q7 5 13.5 8" fill="none" stroke="#8a7020" stroke-width="0.6"/></svg>
<div class="t" style="left:109px;top:409px;font-size:11px;letter-spacing:-0.2px;">Face Meshing</div>
<div class="a" style="left:0;top:668px;width:353px;height:1px;background:#ccd0dc"></div>
<div class="a" style="left:352px;top:668px;width:1px;height:20px;background:#d0d4de"></div><div class="a" style="left:0;top:669px;width:1px;height:19px;background:#d0d4de"></div>
<div class="t" style="left:5px;top:671px;font-size:12px;color:#444">Details of "Mesh"</div>
<svg class="a" style="left:100px;top:674px" width="184" height="7"><defs><pattern id="gp2" width="4" height="8" patternUnits="userSpaceOnUse"><rect x="2" y="1" width="1" height="1" fill="#a4a4ac"/><rect x="0" y="5" width="1" height="1" fill="#a4a4ac"/></pattern></defs><rect width="184" height="7" fill="url(#gp2)"/></svg>
<svg class="a" style="left:287px;top:672px" width="58" height="12" viewBox="0 0 58 12"><path d="M0 3.5h9L4.5 8z" fill="#1e1e1e"/><path d="M18 1h4v6h2v1h-3v4h-0.8v-4h-3V7h2z" fill="#1e1e1e"/><path d="M18.5 1h3v6h-3z" fill="#fff" stroke="#1e1e1e"/><rect x="31.5" y="1.5" width="10" height="9" fill="none" stroke="#1e1e1e" stroke-width="1.3"/><path d="M31.5 2h10" stroke="#1e1e1e" stroke-width="2"/><path d="M49 2l8 8M57 2l-8 8" stroke="#1e1e1e" stroke-width="1.4"/></svg>
<div class="a" style="left:0;top:688px;width:337px;height:332px;overflow:hidden"><div class="a" style="left:13px;top:0px;width:323px;height:19px;border:1px solid #a9a9a9;background:#fff"></div><svg class="a" style="left:2px;top:4px" width="10" height="10" viewBox="0 0 10 10"><rect x="0.5" y="0.5" width="9" height="9" fill="#fff" stroke="#808080"/><path d="M2 5h6" stroke="#111" stroke-width="1.1"/></svg><div class="t" style="left:17px;top:2px;font-size:11px;font-weight:bold">Display</div><div class="a" style="left:13px;top:18px;width:222px;height:19px;border:1px solid #a9a9a9;background:#fff"></div><div class="a" style="left:234px;top:18px;width:102px;height:19px;border:1px solid #a9a9a9;background:#fff"></div><div class="t" style="left:17px;top:20px;font-size:11px">Display Style</div><div class="t" style="left:238px;top:20px;font-size:11px">Use Geometry Se...</div><div class="a" style="left:13px;top:36px;width:323px;height:19px;border:1px solid #a9a9a9;background:#fff"></div><svg class="a" style="left:2px;top:40px" width="10" height="10" viewBox="0 0 10 10"><rect x="0.5" y="0.5" width="9" height="9" fill="#fff" stroke="#808080"/><path d="M2 5h6" stroke="#111" stroke-width="1.1"/></svg><div class="t" style="left:17px;top:38px;font-size:11px;font-weight:bold">Defaults</div><div class="a" style="left:13px;top:54px;width:222px;height:19px;border:1px solid #a9a9a9;background:#fff"></div><div class="a" style="left:234px;top:54px;width:102px;height:19px;border:1px solid #a9a9a9;background:#fff"></div><div class="t" style="left:17px;top:56px;font-size:11px">Physics Preference</div><div class="t" style="left:238px;top:56px;font-size:11px">CFD</div><div class="a" style="left:13px;top:72px;width:222px;height:19px;border:1px solid #a9a9a9;background:#fff"></div><div class="a" style="left:234px;top:72px;width:102px;height:19px;border:1px solid #a9a9a9;background:#fff"></div><div class="t" style="left:17px;top:74px;font-size:11px">Solver Preference</div><div class="t" style="left:238px;top:74px;font-size:11px">Fluent</div><div class="a" style="left:13px;top:90px;width:222px;height:19px;border:1px solid #a9a9a9;background:#fff"></div><div class="a" style="left:234px;top:90px;width:102px;height:19px;border:1px solid #a9a9a9;background:#fff"></div><div class="t" style="left:17px;top:92px;font-size:11px">Element Order</div><div class="t" style="left:238px;top:92px;font-size:11px">Linear</div><div class="a" style="left:13px;top:108px;width:222px;height:19px;border:1px solid #a9a9a9;background:#fff"></div><div class="a" style="left:234px;top:108px;width:102px;height:19px;border:1px solid #a9a9a9;background:#fff"></div><div class="a" style="left:17px;top:112px;width:12px;height:12px;border:1px solid #c8c8c8;background:#fff"></div><div class="t" style="left:33px;top:110px;font-size:11px">Element Size</div><div class="t" style="left:238px;top:110px;font-size:11px">Default</div><div class="a" style="left:13px;top:126px;width:222px;height:19px;border:1px solid #a9a9a9;background:#fff"></div><div class="a" style="left:234px;top:126px;width:102px;height:19px;border:1px solid #a9a9a9;background:#fff"></div><div class="t" style="left:17px;top:128px;font-size:11px">Export Format</div><div class="t" style="left:238px;top:128px;font-size:11px">Standard</div><div class="a" style="left:13px;top:144px;width:222px;height:19px;border:1px solid #a9a9a9;background:#fff"></div><div class="a" style="left:234px;top:144px;width:102px;height:19px;border:1px solid #a9a9a9;background:#fff"></div><div class="t" style="left:17px;top:146px;font-size:11px">Export Preview Surface Mesh</div><div class="t" style="left:238px;top:146px;font-size:11px">No</div><div class="a" style="left:13px;top:162px;width:323px;height:19px;border:1px solid #a9a9a9;background:#fff"></div><svg class="a" style="left:2px;top:166px" width="10" height="10" viewBox="0 0 10 10"><rect x="0.5" y="0.5" width="9" height="9" fill="#fff" stroke="#808080"/><path d="M2 5h6" stroke="#111" stroke-width="1.1"/></svg><div class="t" style="left:17px;top:164px;font-size:11px;font-weight:bold">Sizing</div><div class="a" style="left:13px;top:180px;width:222px;height:19px;border:1px solid #a9a9a9;background:#fff"></div><div class="a" style="left:234px;top:180px;width:102px;height:19px;border:1px solid #a9a9a9;background:#fff"></div><div class="t" style="left:17px;top:182px;font-size:11px">Use Adaptive Sizing</div><div class="t" style="left:238px;top:182px;font-size:11px">Yes</div><div class="a" style="left:13px;top:198px;width:222px;height:19px;border:1px solid #a9a9a9;background:#fff"></div><div class="a" style="left:234px;top:198px;width:102px;height:19px;border:1px solid #a9a9a9;background:#fff"></div><div class="t" style="left:17px;top:200px;font-size:11px">Resolution</div><div class="t" style="left:238px;top:200px;font-size:11px">4</div><div class="a" style="left:13px;top:216px;width:222px;height:19px;border:1px solid #a9a9a9;background:#fff"></div><div class="a" style="left:234px;top:216px;width:102px;height:19px;border:1px solid #a9a9a9;background:#fff"></div><div class="t" style="left:17px;top:218px;font-size:11px">Mesh Defeaturing</div><div class="t" style="left:238px;top:218px;font-size:11px">Yes</div><div class="a" style="left:13px;top:234px;width:222px;height:19px;border:1px solid #a9a9a9;background:#fff"></div><div class="a" style="left:234px;top:234px;width:102px;height:19px;border:1px solid #a9a9a9;background:#fff"></div><div class="a" style="left:17px;top:238px;width:12px;height:12px;border:1px solid #c8c8c8;background:#fff"></div><div class="t" style="left:33px;top:236px;font-size:11px">Defeature Size</div><div class="t" style="left:238px;top:236px;font-size:11px">Default</div><div class="a" style="left:13px;top:252px;width:222px;height:19px;border:1px solid #a9a9a9;background:#fff"></div><div class="a" style="left:234px;top:252px;width:102px;height:19px;border:1px solid #a9a9a9;background:#fff"></div><div class="t" style="left:17px;top:254px;font-size:11px">Transition</div><div class="t" style="left:238px;top:254px;font-size:11px">Slow</div><div class="a" style="left:13px;top:270px;width:222px;height:19px;border:1px solid #a9a9a9;background:#fff"></div><div class="a" style="left:234px;top:270px;width:102px;height:19px;border:1px solid #a9a9a9;background:#fff"></div><div class="t" style="left:17px;top:272px;font-size:11px">Span Angle Center</div><div class="t" style="left:238px;top:272px;font-size:11px">Fine</div><div class="a" style="left:13px;top:288px;width:222px;height:19px;border:1px solid #a9a9a9;background:#fff"></div><div class="a" style="left:234px;top:288px;width:102px;height:19px;border:1px solid #a9a9a9;background:#fff"></div><div class="t" style="left:17px;top:290px;font-size:11px">Initial Size Seed</div><div class="t" style="left:238px;top:290px;font-size:11px">Assembly</div><div class="a" style="left:13px;top:306px;width:222px;height:19px;border:1px solid #a9a9a9;background:#fff"></div><div class="a" style="left:234px;top:306px;width:102px;height:19px;border:1px solid #a9a9a9;background:#e8e8e6"></div><div class="t" style="left:17px;top:308px;font-size:11px">Bounding Box Diagonal</div><div class="t" style="left:238px;top:308px;font-size:11px">29.155 m</div><div class="a" style="left:13px;top:324px;width:222px;height:19px;border:1px solid #a9a9a9;background:#fff"></div><div class="a" style="left:234px;top:324px;width:102px;height:19px;border:1px solid #a9a9a9;background:#e8e8e6"></div><div class="t" style="left:17px;top:326px;font-size:11px">Average Surface Area</div><div class="t" style="left:238px;top:326px;font-size:11px">46.869 m²</div></div>
<div class="a" style="left:337px;top:688px;width:16px;height:332px;background:#f0f0f0"></div>
<svg class="a" style="left:340px;top:693px" width="9" height="6" viewBox="0 0 9 6"><path d="M0.8 5.2L4.5 1.5l3.7 3.7" fill="none" stroke="#606060" stroke-width="1.6"/></svg>
<div class="a" style="left:338px;top:705px;width:14px;height:109px;background:#c8c8c8"></div>
<svg class="a" style="left:340px;top:1009px" width="9" height="6" viewBox="0 0 9 6"><path d="M0.8 0.8L4.5 4.5l3.7-3.7" fill="none" stroke="#606060" stroke-width="1.6"/></svg>
<!-- ===== VIEWPORT ===== -->
<svg id="vp" width="1563" height="645" viewBox="357 163 1563 645" style="position:absolute;left:357px;top:163px"><defs><linearGradient id="tg" x1="0" y1="0" x2="0" y2="1"><stop offset="0" stop-color="#aebfeb"/><stop offset="1" stop-color="#c8d2f1"/></linearGradient></defs><rect x="357" y="163" width="1563" height="645" fill="#7a8a9c"/><polygon points="510,567.5 990,447 1710,567.5" fill="url(#tg)"/><g stroke="#e4e4e4" stroke-width="6" stroke-linecap="butt" fill="none"><polyline points="510,567.5 990,447 1710,567.5"/><line x1="510" y1="567.5" x2="1710" y2="567.5"/></g><rect x="987" y="163" width="6" height="645" fill="#e6e6e6"/><rect x="1707" y="163" width="6" height="645" fill="#e6e6e6"/><g><line x1="357" y1="171.5" x2="510" y2="171.5" stroke="#000" stroke-width="1.2"/><line x1="1710" y1="171.5" x2="1920" y2="171.5" stroke="#000" stroke-width="1.2"/><line x1="357" y1="207.5" x2="510" y2="207.5" stroke="#000" stroke-width="1.2"/><line x1="1710" y1="207.5" x2="1920" y2="207.5" stroke="#000" stroke-width="1.2"/><line x1="357" y1="243.5" x2="510" y2="243.5" stroke="#000" stroke-width="1.2"/><line x1="1710" y1="243.5" x2="1920" y2="243.5" stroke="#000" stroke-width="1.2"/><line x1="357" y1="279.5" x2="510" y2="279.5" stroke="#000" stroke-width="1.2"/><line x1="1710" y1="279.5" x2="1920" y2="279.5" stroke="#000" stroke-width="1.2"/><line x1="357" y1="315.5" x2="510" y2="315.5" stroke="#000" stroke-width="1.2"/><line x1="1710" y1="315.5" x2="1920" y2="315.5" stroke="#000" stroke-width="1.2"/><line x1="357" y1="351.5" x2="510" y2="351.5" stroke="#000" stroke-width="1.2"/><line x1="1710" y1="351.5" x2="1920" y2="351.5" stroke="#000" stroke-width="1.2"/><line x1="357" y1="387.5" x2="510" y2="387.5" stroke="#000" stroke-width="1.2"/><line x1="1710" y1="387.5" x2="1920" y2="387.5" stroke="#000" stroke-width="1.2"/><line x1="357" y1="423.5" x2="510" y2="423.5" stroke="#000" stroke-width="1.2"/><line x1="1710" y1="423.5" x2="1920" y2="423.5" stroke="#000" stroke-width="1.2"/><line x1="357" y1="459.5" x2="510" y2="459.5" stroke="#000" stroke-width="1.2"/><line x1="1710" y1="459.5" x2="1920" y2="459.5" stroke="#000" stroke-width="1.2"/><line x1="357" y1="495.5" x2="510" y2="495.5" stroke="#000" stroke-width="1.2"/><line x1="1710" y1="495.5" x2="1920" y2="495.5" stroke="#000" stroke-width="1.2"/><line x1="357" y1="531.5" x2="510" y2="531.5" stroke="#000" stroke-width="1.2"/><line x1="1710" y1="531.5" x2="1920" y2="531.5" stroke="#000" stroke-width="1.2"/><line x1="357" y1="567.5" x2="1920" y2="567.5" stroke="#000" stroke-width="1.2"/><line x1="357" y1="603.5" x2="1920" y2="603.5" stroke="#000" stroke-width="1.2"/><line x1="357" y1="639.5" x2="1920" y2="639.5" stroke="#000" stroke-width="1.2"/><line x1="357" y1="675.5" x2="1920" y2="675.5" stroke="#000" stroke-width="1.2"/><line x1="357" y1="711.5" x2="1920" y2="711.5" stroke="#000" stroke-width="1.2"/><line x1="357" y1="747.5" x2="1920" y2="747.5" stroke="#000" stroke-width="1.2"/><line x1="357" y1="783.5" x2="1920" y2="783.5" stroke="#000" stroke-width="1.2"/><line x1="510" y1="171.5" x2="990" y2="57.24999999999994" stroke="#000" stroke-width="1.2"/><line x1="990" y1="57.24999999999994" x2="1710" y2="171.5" stroke="#000" stroke-width="1.2"/><line x1="510" y1="207.5" x2="990" y2="92.69999999999999" stroke="#000" stroke-width="1.2"/><line x1="990" y1="92.69999999999999" x2="1710" y2="207.5" stroke="#000" stroke-width="1.2"/><line x1="510" y1="243.5" x2="990" y2="128.14999999999998" stroke="#000" stroke-width="1.2"/><line x1="990" y1="128.14999999999998" x2="1710" y2="243.5" stroke="#000" stroke-width="1.2"/><line x1="510" y1="279.5" x2="990" y2="163.59999999999997" stroke="#000" stroke-width="1.2"/><line x1="990" y1="163.59999999999997" x2="1710" y2="279.5" stroke="#000" stroke-width="1.2"/><line x1="510" y1="315.5" x2="990" y2="199.04999999999995" stroke="#000" stroke-width="1.2"/><line x1="990" y1="199.04999999999995" x2="1710" y2="315.5" stroke="#000" stroke-width="1.2"/><line x1="510" y1="351.5" x2="990" y2="234.49999999999997" stroke="#000" stroke-width="1.2"/><line x1="990" y1="234.49999999999997" x2="1710" y2="351.5" stroke="#000" stroke-width="1.2"/><line x1="510" y1="387.5" x2="990" y2="269.95" stroke="#000" stroke-width="1.2"/><line x1="990" y1="269.95" x2="1710" y2="387.5" stroke="#000" stroke-width="1.2"/><line x1="510" y1="423.5" x2="990" y2="305.4" stroke="#000" stroke-width="1.2"/><line x1="990" y1="305.4" x2="1710" y2="423.5" stroke="#000" stroke-width="1.2"/><line x1="510" y1="459.5" x2="990" y2="340.84999999999997" stroke="#000" stroke-width="1.2"/><line x1="990" y1="340.84999999999997" x2="1710" y2="459.5" stroke="#000" stroke-width="1.2"/><line x1="510" y1="495.5" x2="990" y2="376.29999999999995" stroke="#000" stroke-width="1.2"/><line x1="990" y1="376.29999999999995" x2="1710" y2="495.5" stroke="#000" stroke-width="1.2"/><line x1="510" y1="531.5" x2="990" y2="411.75" stroke="#000" stroke-width="1.2"/><line x1="990" y1="411.75" x2="1710" y2="531.5" stroke="#000" stroke-width="1.2"/><line x1="389.5" y1="163" x2="389.5" y2="808" stroke="#000" stroke-width="1.2"/><line x1="449.5" y1="163" x2="449.5" y2="808" stroke="#000" stroke-width="1.2"/><line x1="509.5" y1="163" x2="509.5" y2="808" stroke="#000" stroke-width="1.2"/><line x1="1842.2" y1="163" x2="1842.2" y2="808" stroke="#000" stroke-width="1.2"/><line x1="749.5" y1="163" x2="749.5" y2="507.0" stroke="#000" stroke-width="1.2"/><line x1="749.5" y1="567" x2="749.5" y2="808" stroke="#000" stroke-width="1.2"/><line x1="1229.7" y1="163" x2="1229.7" y2="487.0" stroke="#000" stroke-width="1.2"/><line x1="1229.7" y1="567" x2="1229.7" y2="808" stroke="#000" stroke-width="1.2"/><line x1="1470" y1="163" x2="1470" y2="527.0" stroke="#000" stroke-width="1.2"/><line x1="1470" y1="567" x2="1470" y2="808" stroke="#000" stroke-width="1.2"/></g><g fill="#e000e0"><ellipse cx="510" cy="567.5" rx="2.4" ry="1.8"/><ellipse cx="510" cy="567.5" rx="2.4" ry="1.8"/><ellipse cx="558" cy="567.5" rx="2.4" ry="1.8"/><ellipse cx="558" cy="555.5" rx="2.4" ry="1.8"/><ellipse cx="606" cy="567.5" rx="2.4" ry="1.8"/><ellipse cx="606" cy="543.5" rx="2.4" ry="1.8"/><ellipse cx="654" cy="567.5" rx="2.4" ry="1.8"/><ellipse cx="654" cy="531.5" rx="2.4" ry="1.8"/><ellipse cx="702" cy="567.5" rx="2.4" ry="1.8"/><ellipse cx="702" cy="519.5" rx="2.4" ry="1.8"/><ellipse cx="750" cy="567.5" rx="2.4" ry="1.8"/><ellipse cx="750" cy="507.5" rx="2.4" ry="1.8"/><ellipse cx="798" cy="567.5" rx="2.4" ry="1.8"/><ellipse cx="798" cy="495.5" rx="2.4" ry="1.8"/><ellipse cx="846" cy="567.5" rx="2.4" ry="1.8"/><ellipse cx="846" cy="483.5" rx="2.4" ry="1.8"/><ellipse cx="894" cy="567.5" rx="2.4" ry="1.8"/><ellipse cx="894" cy="471.5" rx="2.4" ry="1.8"/><ellipse cx="942" cy="567.5" rx="2.4" ry="1.8"/><ellipse cx="942" cy="459.5" rx="2.4" ry="1.8"/><ellipse cx="990" cy="567.5" rx="2.4" ry="1.8"/><ellipse cx="990" cy="447.5" rx="2.4" ry="1.8"/><ellipse cx="1050" cy="567.5" rx="2.4" ry="1.8"/><ellipse cx="1050" cy="457.0" rx="2.4" ry="1.8"/><ellipse cx="1110" cy="567.5" rx="2.4" ry="1.8"/><ellipse cx="1110" cy="467.0" rx="2.4" ry="1.8"/><ellipse cx="1170" cy="567.5" rx="2.4" ry="1.8"/><ellipse cx="1170" cy="477.0" rx="2.4" ry="1.8"/><ellipse cx="1230" cy="567.5" rx="2.4" ry="1.8"/><ellipse cx="1230" cy="487.0" rx="2.4" ry="1.8"/><ellipse cx="1290" cy="567.5" rx="2.4" ry="1.8"/><ellipse cx="1290" cy="497.0" rx="2.4" ry="1.8"/><ellipse cx="1350" cy="567.5" rx="2.4" ry="1.8"/><ellipse cx="1350" cy="507.0" rx="2.4" ry="1.8"/><ellipse cx="1410" cy="567.5" rx="2.4" ry="1.8"/><ellipse cx="1410" cy="517.0" rx="2.4" ry="1.8"/><ellipse cx="1470" cy="567.5" rx="2.4" ry="1.8"/><ellipse cx="1470" cy="527.0" rx="2.4" ry="1.8"/><ellipse cx="1530" cy="567.5" rx="2.4" ry="1.8"/><ellipse cx="1530" cy="537.0" rx="2.4" ry="1.8"/><ellipse cx="1590" cy="567.5" rx="2.4" ry="1.8"/><ellipse cx="1590" cy="547.0" rx="2.4" ry="1.8"/><ellipse cx="1650" cy="567.5" rx="2.4" ry="1.8"/><ellipse cx="1650" cy="557.0" rx="2.4" ry="1.8"/><ellipse cx="1710" cy="567.5" rx="2.4" ry="1.8"/><ellipse cx="1710" cy="567.0" rx="2.4" ry="1.8"/></g><g stroke="#000" stroke-width="1.3" fill="none"><polyline points="510,567.5 990,447 1710,567.5"/></g><line x1="990" y1="163" x2="990" y2="447" stroke="#606060" stroke-width="2"/><line x1="990" y1="567" x2="990" y2="808" stroke="#606060" stroke-width="2"/><line x1="1710" y1="163" x2="1710" y2="808" stroke="#606060" stroke-width="2"/><g fill="#900090"><ellipse cx="990" cy="56.74999999999994" rx="2" ry="1.6"/><ellipse cx="990" cy="92.19999999999999" rx="2" ry="1.6"/><ellipse cx="990" cy="127.64999999999998" rx="2" ry="1.6"/><ellipse cx="990" cy="163.09999999999997" rx="2" ry="1.6"/><ellipse cx="990" cy="198.54999999999995" rx="2" ry="1.6"/><ellipse cx="990" cy="233.99999999999997" rx="2" ry="1.6"/><ellipse cx="990" cy="269.45" rx="2" ry="1.6"/><ellipse cx="990" cy="304.9" rx="2" ry="1.6"/><ellipse cx="990" cy="340.34999999999997" rx="2" ry="1.6"/><ellipse cx="990" cy="375.79999999999995" rx="2" ry="1.6"/><ellipse cx="990" cy="411.25" rx="2" ry="1.6"/><ellipse cx="1710" cy="171.5" rx="2" ry="1.6"/><ellipse cx="1710" cy="207.5" rx="2" ry="1.6"/><ellipse cx="1710" cy="243.5" rx="2" ry="1.6"/><ellipse cx="1710" cy="279.5" rx="2" ry="1.6"/><ellipse cx="1710" cy="315.5" rx="2" ry="1.6"/><ellipse cx="1710" cy="351.5" rx="2" ry="1.6"/><ellipse cx="1710" cy="387.5" rx="2" ry="1.6"/><ellipse cx="1710" cy="423.5" rx="2" ry="1.6"/><ellipse cx="1710" cy="459.5" rx="2" ry="1.6"/><ellipse cx="1710" cy="495.5" rx="2" ry="1.6"/><ellipse cx="1710" cy="531.5" rx="2" ry="1.6"/><ellipse cx="1710" cy="567.5" rx="2" ry="1.6"/><ellipse cx="1710" cy="603.5" rx="2" ry="1.6"/><ellipse cx="1710" cy="639.5" rx="2" ry="1.6"/><ellipse cx="1710" cy="675.5" rx="2" ry="1.6"/><ellipse cx="1710" cy="711.5" rx="2" ry="1.6"/><ellipse cx="1710" cy="747.5" rx="2" ry="1.6"/><ellipse cx="1710" cy="783.5" rx="2" ry="1.6"/><ellipse cx="990" cy="603.5" rx="2" ry="1.6"/><ellipse cx="990" cy="639.5" rx="2" ry="1.6"/><ellipse cx="990" cy="675.5" rx="2" ry="1.6"/><ellipse cx="990" cy="711.5" rx="2" ry="1.6"/><ellipse cx="990" cy="747.5" rx="2" ry="1.6"/><ellipse cx="990" cy="783.5" rx="2" ry="1.6"/></g></svg>
<!-- ===== SELECTION INFO ===== -->
<div class="a" style="left:357px;top:859px;width:800px;height:16px;background:#f0f0f0;border-top:1px solid #fff;border-right:1px solid #696969;border-bottom:1px solid #696969"></div>
<div class="a" style="left:357px;top:875px;width:1563px;height:145px;background:#a0a0a0"></div>
<div class="a" style="left:1157px;top:859px;width:763px;height:16px;background:#a0a0a0"></div>
<!-- ===== STATUS BAR ===== -->
<div class="a" style="left:0;top:1020px;width:1923px;height:20px;background:#007acc"></div>
<svg class="a" style="left:367px;top:141px" width="6" height="18"><defs><pattern id="gp5" width="4" height="4" patternUnits="userSpaceOnUse"><rect x="0" y="0" width="1" height="1" fill="#a4a4ac"/><rect x="2" y="2" width="1" height="1" fill="#a4a4ac"/></pattern></defs><rect width="6" height="18" fill="url(#gp5)"/></svg>
<svg class="a" style="left:383px;top:143px" width="15" height="15" viewBox="0 0 15 15"><circle cx="6.5" cy="6.5" r="5.3" fill="none" stroke="#333" stroke-width="1.6"/><path d="M10.3 10.3l3.5 3.5" stroke="#333" stroke-width="1.8"/><path d="M3.5 6.5l3-2.5v5z M6 5.5h3.5v2H6z" fill="#e0a800"/></svg>
<svg class="a" style="left:405px;top:143px" width="15" height="15" viewBox="0 0 15 15"><circle cx="6.5" cy="6.5" r="5.3" fill="none" stroke="#a0a0a0" stroke-width="1.6"/><path d="M10.3 10.3l3.5 3.5" stroke="#a0a0a0" stroke-width="1.8"/><path d="M9.5 6.5l-3-2.5v5z M3.5 5.5H7v2H3.5z" fill="#b0b0b0"/></svg>
<div class="a" style="left:425px;top:140px;width:1px;height:20px;background:#ccced6"></div>
<div class="a" style="left:429px;top:139px;width:22px;height:22px;border:1.5px solid #3c94ee"></div>
<svg class="a" style="left:433px;top:143px" width="14" height="15" viewBox="0 0 14 15"><path d="M7 0.8l6 3v7.5l-6 3-6-3V3.8z" fill="#9a9a9a"/><path d="M1 3.8l6 3 6-3v7.5l-6 3-6-3z" fill="#606060"/><path d="M7 6.8v7.5l6-3V3.8z" fill="#444"/><path d="M7 0.8l6 3v7.5l-6 3-6-3V3.8zM1 3.8l6 3 6-3M7 6.8v7.5" fill="none" stroke="#333" stroke-width="1"/></svg>
<svg class="a" style="left:455px;top:144px" width="14" height="14" viewBox="0 0 14 14"><path d="M7 0.8l6 3v7.5l-6 3-6-3V3.8z" fill="#c8c8c8"/><path d="M1 3.8l6 3 6-3v7.5l-6 3-6-3z" fill="#a0a0a0"/><path d="M7 6.8v7.5l6-3V3.8z" fill="#8a8a8a"/></svg>
<svg class="a" style="left:477px;top:142px" width="15" height="15" viewBox="0 0 15 15"><path d="M7 2l3-1.5 4 2v3l-3 1.5-4-2z" fill="#fff" stroke="#333"/><path d="M1 8l3-1.5 4 2v3L5 13l-4-2z" fill="#e0a800" stroke="#333"/><path d="M2 5A6 6 0 0 1 5 1.5M13 9a6 6 0 0 1-3 4.5" fill="none" stroke="#333" stroke-dasharray="1.5 1"/></svg>
<div class="a" style="left:497px;top:140px;width:1px;height:20px;background:#ccced6"></div>
<svg class="a" style="left:505px;top:143px" width="15" height="15" viewBox="0 0 15 15"><rect x="0.5" y="0.5" width="5" height="5" fill="#fff" stroke="#777"/><path d="M6.5 3l4 3" stroke="#aaa"/><rect x="7.5" y="7.5" width="7" height="7" fill="#fff" stroke="#777"/><path d="M11 7.5v7M7.5 11h7" stroke="#777"/></svg>
<div class="a" style="left:525px;top:140px;width:1px;height:20px;background:#ccced6"></div>
<svg class="a" style="left:533px;top:143px" width="15" height="15" viewBox="0 0 15 15"><path d="M2 8A5.5 5.5 0 0 1 12.5 5M13 7a5.5 5.5 0 0 1-10.5 3" fill="none" stroke="#333" stroke-width="1.5"/><path d="M11 2.5l3 2.5-3.5 1.5z M4 12.5l-3-2.5 3.5-1.5z" fill="#e0a800"/></svg>
<svg class="a" style="left:554px;top:148px" width="7" height="4" viewBox="0 0 7 4"><path d="M0 0h7L3.5 4z" fill="#7a8aa8"/></svg>
<svg class="a" style="left:566px;top:143px" width="15" height="15" viewBox="0 0 15 15"><path d="M7.5 0.5l3 3h-6zM7.5 14.5l3-3h-6zM0.5 7.5l3-3v6zM14.5 7.5l-3-3v6z" fill="#e0a800"/><path d="M6 5.5h3M6 9.5h3M5.5 6v3M9.5 6v3" stroke="#333" stroke-width="1.2"/><rect x="6" y="6" width="3" height="3" fill="#333"/></svg>
<svg class="a" style="left:589px;top:143px" width="15" height="15" viewBox="0 0 15 15"><circle cx="6.5" cy="6.5" r="5.3" fill="none" stroke="#333" stroke-width="1.6"/><path d="M10.3 10.3l3.5 3.5" stroke="#333" stroke-width="1.8"/><path d="M6.5 2.8l2 2.2h-4zM6.5 10.2l2-2.2h-4z" fill="#e0a800"/></svg>
<svg class="a" style="left:611px;top:143px" width="15" height="15" viewBox="0 0 15 15"><circle cx="6.5" cy="6.5" r="5.3" fill="none" stroke="#333" stroke-width="1.6"/><path d="M10.3 10.3l3.5 3.5" stroke="#333" stroke-width="1.8"/><path d="M5.5 3.5h2v2h2v2h-2v2h-2v-2h-2v-2h2z" fill="#e0a800"/></svg>
<svg class="a" style="left:632px;top:143px" width="15" height="15" viewBox="0 0 15 15"><circle cx="6.5" cy="6.5" r="5.3" fill="none" stroke="#333" stroke-width="1.6"/><path d="M10.3 10.3l3.5 3.5" stroke="#333" stroke-width="1.8"/><path d="M6.5 3.5l3 1.5v3l-3 1.5-3-1.5V5z" fill="#6a9ae0" stroke="#333" stroke-width="0.6"/></svg>
<svg class="a" style="left:654px;top:143px" width="15" height="15" viewBox="0 0 15 15"><circle cx="6.5" cy="6.5" r="5.3" fill="none" stroke="#333" stroke-width="1.6"/><path d="M10.3 10.3l3.5 3.5" stroke="#333" stroke-width="1.8"/><path d="M6.5 3.5l3 1.5v3l-3 1.5-3-1.5V5z" fill="#fff" stroke="#333" stroke-width="0.6"/><path d="M6.5 6.5l3-1.5v3l-3 1.5z" fill="#20c020"/></svg>
<svg class="a" style="left:677px;top:143px" width="15" height="15" viewBox="0 0 15 15"><circle cx="6.5" cy="6.5" r="5.3" fill="none" stroke="#333" stroke-width="1.6"/><path d="M10.3 10.3l3.5 3.5" stroke="#333" stroke-width="1.8"/><path d="M6.5 2.8l2 2.2h-4zM6.5 10.2l2-2.2h-4z" fill="#e0a800"/></svg>
<div class="a" style="left:696px;top:140px;width:1px;height:20px;background:#ccced6"></div>
<div class="t" style="left:704px;top:143px;font-size:12px;">Select</div>
<svg class="a" style="left:742px;top:142px" width="15" height="16" viewBox="0 0 15 16"><rect x="0" y="0" width="5.5" height="5.5" fill="#e80000"/><path d="M5 3.5l9 6-3.5 0.8 2.5 4.5-2 1-2.3-4.5-2.7 2.7z" fill="#1e1e1e"/></svg>
<div class="t" style="left:760px;top:143px;font-size:12px;">Mode</div>
<svg class="a" style="left:792px;top:148px" width="7" height="4" viewBox="0 0 7 4"><path d="M0 0h7L3.5 4z" fill="#999"/></svg>
<svg class="a" style="left:810px;top:143px" width="16" height="15" viewBox="0 0 16 15"><path d="M1 7.5V1.5H5M1 4.5h3" fill="none" stroke="#333" stroke-width="1.2"/><ellipse cx="4" cy="4.5" rx="1.6" ry="1.2" fill="#00e000"/><path d="M8.5 6.5V1.5H15" fill="none" stroke="#333" stroke-width="1.2"/><path d="M9.2 2.2h5.5v2.3H9.2z" fill="#00e000"/><path d="M1 14.5V9.5H7" fill="none" stroke="#333" stroke-width="1.2"/><path d="M1.8 10.2h2.5L1.8 13z" fill="#00e000"/><path d="M10 10l3.5 3.5M10 10v2.5M10 10h2.5" stroke="#333" stroke-width="1.1" fill="none"/></svg>
<svg class="a" style="left:833px;top:143px" width="15" height="15" viewBox="0 0 15 15"><path d="M0.5 0.5H10.5L13.5 3.5V13.5H3.5L0.5 10.5Z" fill="#fff"/><ellipse cx="3.5" cy="2.8" rx="1.8" ry="1.3" fill="#00e000"/><path d="M0.5 0.5H10.5L13.5 3.5V13.5H3.5L0.5 10.5ZM0.5 0.5L3.5 3.5M3.5 3.5H13.5M3.5 3.5V13.5" fill="none" stroke="#333" stroke-width="1.1"/><path d="M7.5 7.5l3.5 3.5M7.5 7.5v3M7.5 7.5h3" stroke="#333" stroke-width="1.1" fill="none"/></svg>
<div class="a" style="left:851px;top:139px;width:22px;height:22px;border:1.5px solid #3c94ee"></div>
<svg class="a" style="left:855px;top:143px" width="15" height="15" viewBox="0 0 15 15"><path d="M0.5 0.5H10.5L13.5 3.5V13.5H3.5L0.5 10.5Z" fill="#fff"/><path d="M1 1h2.5l3 3H4z" fill="#00e000"/><path d="M0.5 0.5H10.5L13.5 3.5V13.5H3.5L0.5 10.5ZM0.5 0.5L3.5 3.5M3.5 3.5H13.5M3.5 3.5V13.5" fill="none" stroke="#333" stroke-width="1.1"/><path d="M7.5 7.5l3.5 3.5M7.5 7.5v3M7.5 7.5h3" stroke="#333" stroke-width="1.1" fill="none"/></svg>
<svg class="a" style="left:877px;top:143px" width="15" height="15" viewBox="0 0 15 15"><path d="M0.5 0.5H10.5L13.5 3.5V13.5H3.5L0.5 10.5Z" fill="#fff"/><path d="M0.5 0.5H10.5L13.5 3.5H3.5Z" fill="#00e000"/><path d="M0.5 0.5H10.5L13.5 3.5V13.5H3.5L0.5 10.5ZM0.5 0.5L3.5 3.5M3.5 3.5H13.5M3.5 3.5V13.5" fill="none" stroke="#333" stroke-width="1.1"/><path d="M7.5 7.5l3.5 3.5M7.5 7.5v3M7.5 7.5h3" stroke="#333" stroke-width="1.1" fill="none"/></svg>
<svg class="a" style="left:899px;top:143px" width="15" height="15" viewBox="0 0 15 15"><path d="M0.5 0.5H10.5L13.5 3.5V13.5H3.5L0.5 10.5Z" fill="#fff"/><path d="M0.5 0.5H10.5L13.5 3.5V13.5H3.5L0.5 10.5Z" fill="#00e000"/><path d="M0.5 0.5H10.5L13.5 3.5V13.5H3.5L0.5 10.5ZM0.5 0.5L3.5 3.5M3.5 3.5H13.5M3.5 3.5V13.5" fill="none" stroke="#333" stroke-width="1.1"/><path d="M7.5 7.5l3.5 3.5M7.5 7.5v3M7.5 7.5h3" stroke="#333" stroke-width="1.1" fill="none"/></svg>
<svg class="a" style="left:921px;top:143px" width="15" height="15" viewBox="0 0 15 15"><path d="M0.5 0.5H10.5L13.5 3.5V13.5H3.5L0.5 10.5Z" fill="#fff"/><path d="M7 4.5v9.5M10.5 4.5v9.5M4 7.5h10M4 10.5h10M2.2 2.2v10M0.5 6h3.5" stroke="#3a8ef0" stroke-width="1"/><ellipse cx="3.5" cy="2.8" rx="1.8" ry="1.3" fill="#00e000"/><path d="M0.5 0.5H10.5L13.5 3.5V13.5H3.5L0.5 10.5ZM0.5 0.5L3.5 3.5M3.5 3.5H13.5M3.5 3.5V13.5" fill="none" stroke="#333" stroke-width="1.1"/><path d="M7.5 7.5l3.5 3.5M7.5 7.5v3M7.5 7.5h3" stroke="#333" stroke-width="1.1" fill="none"/></svg>
<svg class="a" style="left:943px;top:143px" width="15" height="15" viewBox="0 0 15 15"><path d="M0.5 0.5H10.5L13.5 3.5V13.5H3.5L0.5 10.5Z" fill="#fff"/><path d="M7 4.5v9.5M10.5 4.5v9.5M4 7.5h10M4 10.5h10M2.2 2.2v10M0.5 6h3.5" stroke="#3a8ef0" stroke-width="1"/><path d="M2 1.5h2M6 1.5h2M3.5 3h2M7.5 3h2" stroke="#00e000" stroke-width="1.5"/><path d="M0.5 0.5H10.5L13.5 3.5V13.5H3.5L0.5 10.5ZM0.5 0.5L3.5 3.5M3.5 3.5H13.5M3.5 3.5V13.5" fill="none" stroke="#333" stroke-width="1.1"/><path d="M7.5 7.5l3.5 3.5M7.5 7.5v3M7.5 7.5h3" stroke="#333" stroke-width="1.1" fill="none"/></svg>
<svg class="a" style="left:965px;top:143px" width="15" height="15" viewBox="0 0 15 15"><path d="M0.5 0.5H10.5L13.5 3.5V13.5H3.5L0.5 10.5Z" fill="#fff"/><path d="M7 4.5v9.5M10.5 4.5v9.5M4 7.5h10M4 10.5h10M2.2 2.2v10M0.5 6h3.5" stroke="#3a8ef0" stroke-width="1"/><path d="M5.5 5.5h1M8.5 5.5h1M5.5 8.5h1M8.5 8.5h1M5.5 11h1M8.5 11h1" stroke="#00e000" stroke-width="1.6"/><path d="M0.5 0.5H10.5L13.5 3.5V13.5H3.5L0.5 10.5ZM0.5 0.5L3.5 3.5M3.5 3.5H13.5M3.5 3.5V13.5" fill="none" stroke="#333" stroke-width="1.1"/><path d="M7.5 7.5l3.5 3.5M7.5 7.5v3M7.5 7.5h3" stroke="#333" stroke-width="1.1" fill="none"/></svg>
<svg class="a" style="left:985px;top:142px" width="17" height="16" viewBox="0 0 17 16"><text x="8.5" y="6" font-size="6" fill="#a0a0a0" text-anchor="middle" font-family="Liberation Sans">X.Y.Z</text><path d="M7 8l5 5-2 0.5 1 2.5-1 .5-1-2.5-2 1.5z" fill="#e0a800"/></svg>
<svg class="a" style="left:1008px;top:142px" width="16" height="16" viewBox="0 0 16 16"><path d="M1 1h12l2 3-2 3H1z" fill="#fff" stroke="#333"/><text x="7" y="6.3" font-size="5.5" font-weight="bold" fill="#333" text-anchor="middle" font-family="Liberation Sans">100</text><path d="M6 8l5 5-2 0.5 1 2.5-1 .5-1-2.5-2 1.5z" fill="#e0a800"/></svg>
<svg class="a" style="left:1030px;top:142px" width="16" height="16" viewBox="0 0 16 16"><path d="M1 2h11l3 4-3 4H8l-1 4-2-4H1z" fill="#fff" stroke="#b0b0b0"/><text x="6.5" y="8.5" font-size="6" fill="#b0b0b0" text-anchor="middle" font-family="Liberation Sans">Abc</text></svg>
<div class="a" style="left:1051px;top:140px;width:1px;height:20px;background:#ccced6"></div>
<svg class="a" style="left:1059px;top:143px" width="15" height="15" viewBox="0 0 15 15"><path d="M1 11l4-4 3 2 6-6" fill="none" stroke="#c0c0c0" stroke-width="1.2"/><path d="M1 13h13" stroke="#c8c8c8"/></svg>
<div class="a" style="left:1079px;top:140px;width:1px;height:20px;background:#ccced6"></div>
<svg class="a" style="left:1087px;top:142px" width="15" height="16" viewBox="0 0 15 16"><rect x="0.5" y="1.5" width="14" height="14" fill="#e8c050" stroke="#555"/><path d="M4.5 1.5h6v2h-6z" fill="#555"/></svg>
<div class="t" style="left:1104px;top:143px;font-size:12px;">Clipboard</div>
<svg class="a" style="left:1158px;top:148px" width="7" height="4" viewBox="0 0 7 4"><path d="M0 0h7L3.5 4z" fill="#888"/></svg>
<div class="t" style="left:1176px;top:143px;font-size:12px;">[ Empty ]</div>
<div class="a" style="left:1230px;top:140px;width:1px;height:20px;background:#ccced6"></div>
<svg class="a" style="left:1237px;top:142px" width="16" height="16" viewBox="0 0 16 16"><path d="M8 1l6.5 3v7.5L8 15 1.5 11.5V4z" fill="#fff" stroke="#444"/><path d="M1.5 4L8 7.5 14.5 4M8 7.5V15" fill="none" stroke="#444"/><path d="M1.8 4.5L8 8v6.5l-6.2-3.3z" fill="#40c040"/><circle cx="11" cy="4" r="2" fill="#e0a800"/></svg>
<div class="t" style="left:1255px;top:143px;font-size:12px;">Extend</div>
<svg class="a" style="left:1293px;top:148px" width="7" height="4" viewBox="0 0 7 4"><path d="M0 0h7L3.5 4z" fill="#888"/></svg>
<svg class="a" style="left:1311px;top:142px" width="14" height="16" viewBox="0 0 14 16"><path d="M7 1a3.5 3.5 0 0 1 3.5 3.5C10.5 7 7 11 7 11S3.5 7 3.5 4.5A3.5 3.5 0 0 1 7 1z" fill="#e0a800"/><circle cx="7" cy="4.5" r="1.2" fill="#fff"/><path d="M0 15h14" stroke="#333"/><path d="M3 15l4-3 4 3" fill="none" stroke="#333" stroke-width="0.8"/></svg>
<div class="t" style="left:1328px;top:143px;font-size:12px;">Select By</div>
<svg class="a" style="left:1377px;top:148px" width="7" height="4" viewBox="0 0 7 4"><path d="M0 0h7L3.5 4z" fill="#888"/></svg>
<svg class="a" style="left:1395px;top:142px" width="16" height="16" viewBox="0 0 16 16"><path d="M1 7h5M3.5 5l-2.5 2 2.5 2" fill="none" stroke="#e0a800" stroke-width="1.3"/><path d="M6 4l3-3h6v8l-3 3H6z" fill="#20c020" stroke="#333" stroke-width="0.8"/><path d="M6 4h6v8M12 4l3-3" fill="none" stroke="#333" stroke-width="0.8"/></svg>
<div class="t" style="left:1412px;top:143px;font-size:12px;">Convert</div>
<svg class="a" style="left:1456px;top:148px" width="7" height="4" viewBox="0 0 7 4"><path d="M0 0h7L3.5 4z" fill="#888"/></svg>
<svg class="a" style="left:1471px;top:152px" width="8" height="5" viewBox="0 0 8 5"><path d="M0 0h8L4 5z" fill="#1e1e1e"/></svg>
<div class="t" style="left:372px;top:178px;font-size:12px;font-weight:bold;color:#000;letter-spacing:-0.3px">Mesh</div>
<div class="t" style="left:372px;top:193px;font-size:11.3px;color:#000">2/20/2024 8:39 PM</div>
<div class="t" style="left:372px;top:241px;font-size:11.5px;color:#000">Meshing State</div>
<div class="a" style="left:371px;top:258px;width:16px;height:16px;background:#ff00d0;border:1px solid #333;border-radius:2px"></div>
<div class="t" style="left:393px;top:259px;font-size:11.5px;color:#000">Obsolete Mesh</div>
<div class="a" style="left:371px;top:277px;width:16px;height:16px;background:#f8c000;border:1px solid #333;border-radius:2px"></div>
<div class="t" style="left:393px;top:277px;font-size:11px;color:#000;letter-spacing:0.2px">Failed Mesh</div>
<svg class="a" style="left:1800px;top:170px" width="116" height="84" viewBox="0 0 116 84"><path d="M2.4 28.8h8.5L21.7 2h-8.3z M22.4 2l11.4 26.8h-8.1l-6.5-16.6z" fill="#fff"/><text x="36" y="28.8" font-size="36" font-weight="bold" fill="#fff" font-family="Liberation Sans" textLength="76.5" lengthAdjust="spacingAndGlyphs">nsys</text><text x="113" y="53" font-size="17" font-weight="bold" fill="#fff" font-family="Liberation Sans" text-anchor="end" textLength="68" lengthAdjust="spacingAndGlyphs">2023 R2</text><rect x="2" y="59" width="109" height="2.2" fill="#e2e2e6"/><text x="10" y="81.5" font-size="18" font-weight="bold" fill="#fff" font-family="Liberation Sans" textLength="87" lengthAdjust="spacingAndGlyphs">STUDENT</text></svg>
<div class="a" style="left:898px;top:759px;width:481px;height:12px;border:1px solid #000"></div>
<div class="a" style="left:898px;top:759px;width:121px;height:12px;background:#000"></div>
<div class="a" style="left:1138px;top:759px;width:121px;height:12px;background:#000"></div>
<div class="t" style="left:884px;top:743px;font-size:11px;color:#000;">0.000</div>
<div class="t" style="left:1124px;top:743px;font-size:11px;color:#000;">0.200</div>
<div class="t" style="left:1365px;top:743px;font-size:11px;color:#000;">0.400 (m)</div>
<div class="t" style="left:1004px;top:775px;font-size:11px;color:#000;">0.100</div>
<div class="t" style="left:1245px;top:775px;font-size:11px;color:#000;">0.300</div>
<svg class="a" style="left:1795px;top:598px" width="125" height="130" viewBox="1795 598 125 130"><defs><radialGradient id="sb" cx="0.35" cy="0.35" r="0.7"><stop offset="0" stop-color="#3030ff"/><stop offset="1" stop-color="#000080"/></radialGradient><radialGradient id="sc" cx="0.4" cy="0.35" r="0.7"><stop offset="0" stop-color="#30f0f0"/><stop offset="1" stop-color="#008c9a"/></radialGradient></defs><rect x="1809.5" y="644" width="5" height="58" fill="#008a00"/><path d="M1812 625l8.5 20h-17z" fill="#009000"/><rect x="1818" y="706" width="58" height="5.5" fill="#c80000"/><path d="M1896 708.5l-20.5 8.5v-17z" fill="#d40000"/><circle cx="1811.8" cy="708.8" r="8" fill="url(#sb)"/><circle cx="1851" cy="669.7" r="8.3" fill="url(#sc)"/><text x="1811" y="611" font-size="10" fill="#00b000" font-family="Liberation Sans">Y</text><text x="1908" y="709" font-size="11" fill="#ff0000" font-family="Liberation Sans">X</text></svg>
<svg class="a" style="left:868px;top:469px" width="13" height="13" viewBox="0 0 13 13"><path d="M6.5 0v13M0 6.5h13" stroke="#4a7ae0" stroke-width="1"/></svg>
<div class="a" style="left:357px;top:812px;width:1563px;height:1px;background:#ccd0dc"></div>
<div class="a" style="left:357px;top:812px;width:1px;height:20px;background:#ccd0dc"></div>
<div class="t" style="left:362px;top:815px;font-size:12px;color:#444">Selection Information</div>
<svg class="a" style="left:481px;top:818px" width="1384" height="7"><defs><pattern id="gp4" width="4" height="8" patternUnits="userSpaceOnUse"><rect x="2" y="1" width="1" height="1" fill="#a4a4ac"/><rect x="0" y="5" width="1" height="1" fill="#a4a4ac"/></pattern></defs><rect width="1384" height="7" fill="url(#gp4)"/></svg>
<svg class="a" style="left:1870px;top:816px" width="42" height="11" viewBox="0 0 42 11"><path d="M0 2.5h9L4.5 7z" fill="#1e1e1e"/><path d="M17.5 0.5h3v6h-3z" fill="#fff" stroke="#1e1e1e"/><path d="M15.5 6.5h7M19 6.5v4" stroke="#1e1e1e"/><path d="M33 1l8 8M41 1l-8 8" stroke="#1e1e1e" stroke-width="1.4"/></svg>

<svg class="a" style="left:367px;top:837px" width="6" height="17"><defs><pattern id="gp6" width="4" height="4" patternUnits="userSpaceOnUse"><rect x="0" y="0" width="1" height="1" fill="#a4a4ac"/><rect x="2" y="2" width="1" height="1" fill="#a4a4ac"/></pattern></defs><rect width="6" height="17" fill="url(#gp6)"/></svg>
<div class="t" style="left:381px;top:839px;font-size:11.5px">Coordinate System:</div>
<div class="a" style="left:487px;top:835px;width:152px;height:22px;background:#fff;border:1px solid #d4d7e0"></div>
<div class="t" style="left:490px;top:839px;font-size:11.5px;width:130px;overflow:hidden">Global Coordinate System</div>
<svg class="a" style="left:627px;top:844px" width="7" height="4" viewBox="0 0 7 4"><path d="M0 0h7L3.5 4z" fill="#666"/></svg>
<div class="a" style="left:641px;top:836px;width:1px;height:20px;background:#ccced6"></div>
<svg class="a" style="left:648px;top:837px" width="16" height="16" viewBox="0 0 16 16"><path d="M1.5 3.5l10.5-2 2 11-10.5 2z" fill="#fff" stroke="#333"/><path d="M5 8.5l2 3 4-8" fill="none" stroke="#d8a000" stroke-width="1.6"/></svg>
<div class="a" style="left:669px;top:836px;width:1px;height:20px;background:#ccced6"></div>
<div class="a" style="left:673px;top:835px;width:180px;height:22px;background:#fff;border:1px solid #d4d7e0"></div>
<div class="t" style="left:676px;top:839px;font-size:11.5px">Show Individual and Summary</div>
<svg class="a" style="left:840px;top:844px" width="7" height="4" viewBox="0 0 7 4"><path d="M0 0h7L3.5 4z" fill="#666"/></svg>
<svg class="a" style="left:855px;top:848px" width="8" height="5" viewBox="0 0 8 5"><path d="M0 0h8L4 5z" fill="#1e1e1e"/></svg>
<div class="t" style="left:360px;top:860px;font-size:11.5px">No Selection</div>
<div class="t" style="left:1441px;top:1024px;font-size:11.5px;color:#fff">Messages pane</div>
<div class="t" style="left:1539px;top:1024px;font-size:12px;color:#fff">No Selection</div>
<svg class="a" style="left:1627px;top:1026px" width="9" height="6" viewBox="0 0 9 6"><path d="M0 6L4.5 0.5 9 6z" fill="#fff"/></svg>
<div class="t" style="left:1642px;top:1024px;font-size:12px;color:#fff">Metric (m, kg, N, s, V, A)</div>
<div class="t" style="left:1782px;top:1024px;font-size:12px;color:#fff">Degrees</div>
<div class="t" style="left:1836px;top:1024px;font-size:12px;color:#fff">rad/s</div>
<div class="t" style="left:1875px;top:1024px;font-size:12px;color:#fff">Celsius</div>
<div class="a" style="left:1920px;top:0;width:3px;height:1040px;background:#08b0f4"></div>
</body></html>
